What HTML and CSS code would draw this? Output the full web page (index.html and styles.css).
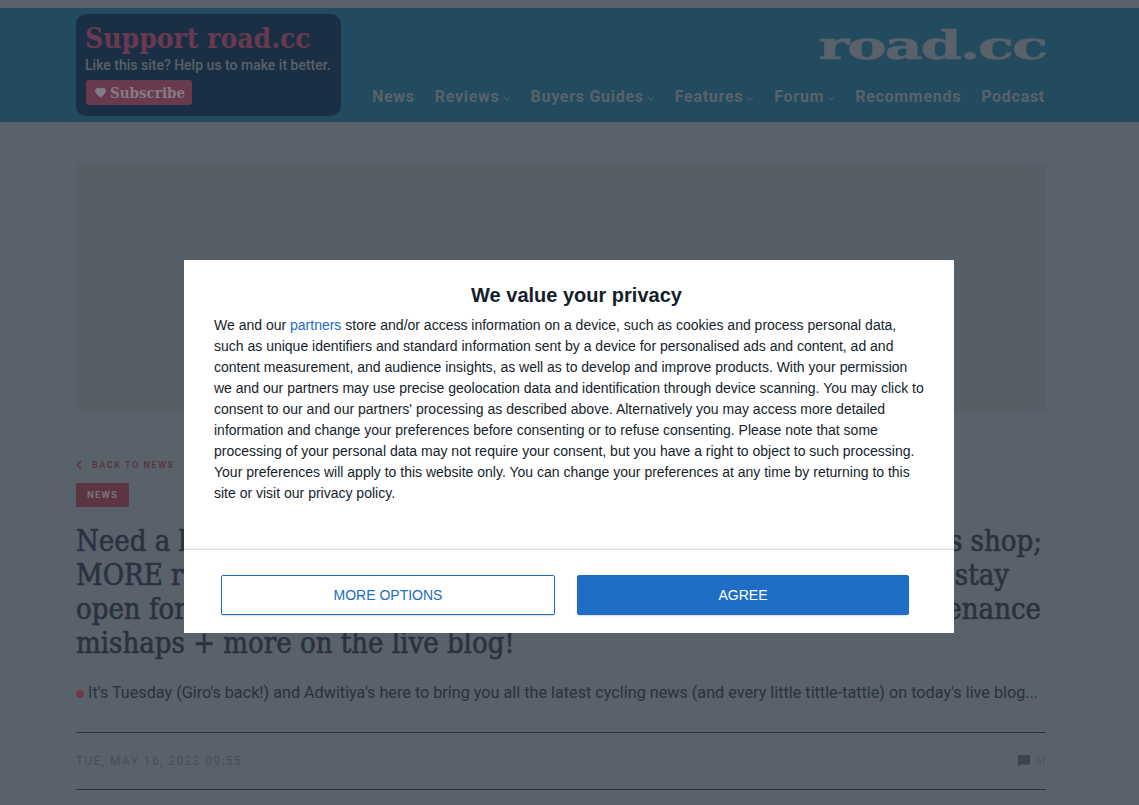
FILE: index.html
```html
<!DOCTYPE html>
<html lang="en">
<head>
<meta charset="utf-8">
<title>road.cc</title>
<link rel="stylesheet" href="styles.css">
</head>
<body>
<div class="topbar"></div>
<header class="site-header">
  <div class="wrap header-inner">
    <div class="support">
      <div class="support-title">Support road.cc</div>
      <div class="support-text">Like this site? Help us to make it better.</div>
      <a class="subscribe"><svg class="heart" viewBox="0 0 24 24"><path d="M12 21.5 10.5 20.1C5.4 15.5 2 12.4 2 8.6 2 5.5 4.4 3 7.5 3c1.7 0 3.4.8 4.5 2.1C13.1 3.8 14.800 3 16.500 3 19.600 3 22 5.500 22 8.600c0 3.800-3.400 6.900-8.500 11.500z"/></svg>Subscribe</a>
    </div>
    <div class="brand">
      <div class="logo"><span class="logo-text">road.cc</span></div>
      <nav class="nav">
        <a>News</a>
        <a>Reviews<svg class="chev" viewBox="0 0 8 5"><path d="M1 1l3 3 3-3"/></svg></a>
        <a>Buyers Guides<svg class="chev" viewBox="0 0 8 5"><path d="M1 1l3 3 3-3"/></svg></a>
        <a>Features<svg class="chev" viewBox="0 0 8 5"><path d="M1 1l3 3 3-3"/></svg></a>
        <a>Forum<svg class="chev" viewBox="0 0 8 5"><path d="M1 1l3 3 3-3"/></svg></a>
        <a>Recommends</a>
        <a>Podcast</a>
      </nav>
    </div>
  </div>
</header>
<main class="wrap">
  <div class="ad"></div>
  <a class="back"><svg class="back-icon" viewBox="0 0 6 10"><path d="M5 1 1.500 5 5 9"/></svg>BACK TO NEWS</a>
  <div class="tag">NEWS</div>
  <h1 class="headline">
    <span class="hl hl-1"><span>Need a bike</span><span>s shop;</span></span>
    <span class="hl hl-2"><span>MORE riders</span><span>stay</span></span>
    <span class="hl hl-3"><span>open for</span><span>enance</span></span>
    <span class="hl">mishaps + more on the live blog!</span>
  </h1>
  <p class="intro"><span class="dot"></span>It's Tuesday (Giro's back!) and Adwitiya's here to bring you all the latest cycling news (and every little tittle-tattle) on today's live blog...</p>
  <div class="meta">
    <span class="date">TUE, MAY 16, 2023 09:55</span>
    <span class="comments"><svg class="comment-icon" viewBox="0 0 12 12"><path d="M0 0h12v9.500H2.500L0 12z"/></svg>51</span>
  </div>
</main>
<section class="modal">
  <div class="modal-body">
    <h2 class="modal-title">We value your privacy</h2>
    <p class="modal-text">We and our <a class="link">partners</a> store and/or access information on a device, such as cookies and process personal data,<br>such as unique identifiers and standard information sent by a device for personalised ads and content, ad and<br>content measurement, and audience insights, as well as to develop and improve products. With your permission<br>we and our partners may use precise geolocation data and identification through device scanning. You may click to<br>consent to our and our partners' processing as described above. Alternatively you may access more detailed<br>information and change your preferences before consenting or to refuse consenting. Please note that some<br>processing of your personal data may not require your consent, but you have a right to object to such processing.<br>Your preferences will apply to this website only. You can change your preferences at any time by returning to this<br>site or visit our privacy policy.</p>
  </div>
  <div class="modal-actions">
    <button class="btn btn-outline">MORE OPTIONS</button>
    <button class="btn btn-solid">AGREE</button>
  </div>
</section>
</body>
</html>
```
FILE: styles.css
```css
* { box-sizing: border-box; }
html, body { margin: 0; height: 100%; }
body { background: #59616a; font-family: Roboto, sans-serif; overflow: hidden; color: #2a3140; }
.wrap { width: 970px; margin-left: 76px; }
.topbar { height: 8px; }
.site-header { height: 114px; background: #224b60; padding-top: 6px; }
.header-inner { display: flex; justify-content: space-between; }
.support { width: 265px; height: 102px; background: #1b2f44; border-radius: 10px; padding: 10px 9px; }
.support-title { font-family: "DejaVu Serif Condensed", "DejaVu Serif", serif; font-weight: 700; font-size: 28px; line-height: 30px; color: #693a4f; white-space: nowrap; }
.support-text { font-weight: 500; font-size: 14px; line-height: 16px; margin-top: 3px; color: #59616a; white-space: nowrap; }
.subscribe { display: inline-flex; align-items: center; gap: 3px; margin: 7px 0 0 1px; height: 25px; width: 106px; padding-left: 8px; background: #693a4f; border-radius: 3px; color: #857b84; font-family: "DejaVu Serif Condensed", "DejaVu Serif", serif; font-weight: 700; font-size: 15px; }
.heart { width: 13px; height: 13px; fill: #857b84; flex: none; }
.brand { display: flex; flex-direction: column; align-items: flex-end; }
.logo { height: 73px; padding-top: 13px; }
.logo-text { display: block; font-family: "DejaVu Serif", serif; font-weight: 700; font-size: 40px; line-height: 36px; color: #59616a; -webkit-text-stroke: .5px #59616a; transform: scaleX(1.48); transform-origin: right center; white-space: nowrap; letter-spacing: -1.500px; }
.nav { display: flex; gap: 20px; padding-right: 1px; font-weight: 700; font-size: 16px; line-height: 20px; color: #59616a; letter-spacing: .72px; }
.nav a { display: flex; align-items: center; white-space: nowrap; }
.chev { width: 8px; height: 5px; margin: 3px 0 0 3px; fill: none; stroke: #59616a; stroke-width: 1; }
.ad { height: 249px; margin-top: 41px; background: #565e66; }
.back { display: flex; align-items: center; margin-top: 47px; height: 12px; font-weight: 700; font-size: 9px; letter-spacing: 1.550px; color: #5a3744; }
.back-icon { width: 6px; height: 10px; margin-right: 10px; fill: none; stroke: #5a3744; stroke-width: 1.800; }
.tag { display: flex; align-items: center; justify-content: center; width: 53px; height: 24px; margin-top: 12px; padding-bottom: 2px; background: #5c3540; color: #78747c; font-weight: 700; font-size: 9.500px; letter-spacing: 1.200px; }
.headline { margin: 17px 0 0; font-family: "DejaVu Serif Condensed", "DejaVu Serif", serif; font-weight: 400; font-size: 29px; line-height: 34px; color: #2a3140; -webkit-text-stroke: .6px #2a3140; }
.hl { display: flex; justify-content: space-between; white-space: nowrap; }
.hl-1 { width: 966px; }
.hl-2 { width: 933px; }
.hl-3 { width: 965px; }
.intro { margin: 22px 0 0; padding-top: 1px; height: 20px; font-size: 16.200px; font-weight: 400; line-height: 20px; color: #2a3140; white-space: nowrap; display: flex; align-items: center; }
.dot { width: 8px; height: 8px; border-radius: 50%; background: #6e3a48; margin-right: 4px; margin-top: 2px; }
.meta { display: flex; justify-content: space-between; align-items: center; height: 58px; margin-top: 30px; border-top: 1px solid #2a3140; border-bottom: 1px solid #2a3140; }
.date { font-size: 12px; letter-spacing: 1.400px; color: #484f5a; }
.comments { display: flex; align-items: center; gap: 6px; font-size: 9px; color: #484f5a; }
.comment-icon { width: 12px; height: 12px; fill: #3c4350; }
.modal { position: fixed; left: 184px; top: 260px; width: 770px; height: 373px; background: #fff; font-family: "Liberation Sans", Arial, sans-serif; display: flex; flex-direction: column; }
.modal-body { height: 290px; padding: 23px 30px 0; border-bottom: 1px solid #dcdcdc; box-shadow: inset 0 -6px 6px -6px rgba(0,0,0,.08); }
.modal-title { margin: 0; padding-left: 15px; font-size: 20px; line-height: 24px; font-weight: 700; text-align: center; color: #141e2b; }
.modal-text { margin: 8px 0 0; font-size: 14px; line-height: 21px; color: #141e2b; white-space: nowrap; }
.link { color: #206dc5; }
.modal-actions { display: flex; gap: 22px; padding: 25px 0 0 37px; }
.btn { height: 40px; border-radius: 2px; font-family: inherit; font-size: 14px; box-shadow: 0 1px 2px rgba(0,0,0,.15); cursor: pointer; }
.btn-outline { width: 334px; background: #fff; border: 1px solid #206dc5; color: #206dc5; }
.btn-solid { width: 332px; background: #206dc5; border: 1px solid #206dc5; color: #fff; }
```
